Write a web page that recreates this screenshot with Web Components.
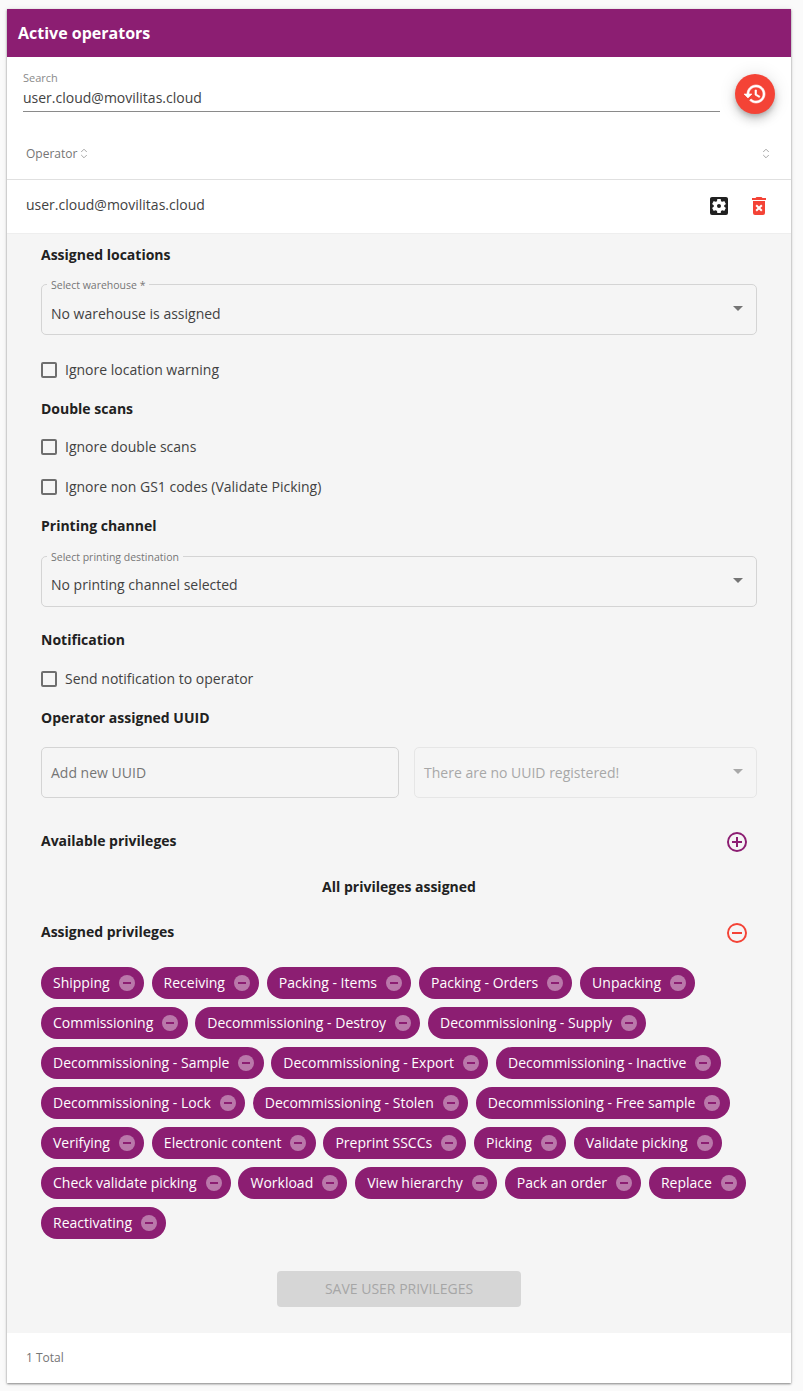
<!DOCTYPE html>
<html lang="en">
<head>
<meta charset="utf-8">
<title>Active operators</title>
<style>
  html, body { margin: 0; background: #fafafa; }
  body { font-family: "Open Sans", "Liberation Sans", sans-serif; color: #212121; padding: 9px 12px 8px 7px; }
</style>
</head>
<body>
<operators-card>
  <search-bar value="user.cloud@movilitas.cloud"></search-bar>
  <operator-table user="user.cloud@movilitas.cloud"></operator-table>
  <operator-details></operator-details>
</operators-card>

<script>
const PURPLE = "#8c1e72";
const RED = "#f44336";

class OperatorsCard extends HTMLElement {
  constructor() {
    super();
    this.attachShadow({ mode: "open" });
    this.shadowRoot.innerHTML = `
      <style>
        :host { display: block; background: #fff; box-shadow: 0 1px 2px rgba(0,0,0,.45), 0 0 6px rgba(0,0,0,.08); }
        header { height: 48px; background: ${PURPLE}; color: #fff; font-size: 16px; font-weight: 700; line-height: 48px; padding-left: 11px; }
        footer { height: 50px; display: flex; align-items: center; padding-left: 19px; padding-bottom: 2px; font-size: 12px; color: #757575; background: #fff; box-sizing: border-box; }
      </style>
      <header>Active operators</header>
      <slot></slot>
      <footer>1 Total</footer>
    `;
  }
}
customElements.define("operators-card", OperatorsCard);

class SearchBar extends HTMLElement {
  constructor() {
    super();
    this.attachShadow({ mode: "open" });
    this.shadowRoot.innerHTML = `
      <style>
        :host { display: flex; height: 74px; box-sizing: border-box; padding: 14px 16px 0; gap: 15px; align-items: flex-start; }
        .field { flex: 1; height: 40px; border-bottom: 1px solid #8a8a8a; }
        label { display: block; font-size: 11px; line-height: 14px; color: #8a8a8a; }
        .value { font-size: 14px; line-height: 20px; margin-top: 3px; color: #424242; }
        button { width: 40px; height: 40px; margin-top: 3px; border: 0; padding: 0; border-radius: 50%; background: ${RED}; display: flex; align-items: center; justify-content: center; box-shadow: 0 3px 5px -1px rgba(0,0,0,.2), 0 6px 10px 0 rgba(0,0,0,.14), 0 1px 18px 0 rgba(0,0,0,.12); }
      </style>
      <div class="field">
        <label>Search</label>
        <div class="value"></div>
      </div>
      <button aria-label="Reset">
        <svg width="24" height="24" viewBox="0 0 24 24"><path fill="#fff" stroke="#fff" stroke-width=".6" d="M13 3c-4.97 0-9 4.03-9 9H1l3.89 3.89.07.14L9 12H6c0-3.87 3.13-7 7-7s7 3.13 7 7-3.13 7-7 7c-1.93 0-3.68-.79-4.94-2.06l-1.42 1.42C8.27 19.99 10.51 21 13 21c4.97 0 9-4.03 9-9s-4.03-9-9-9zm-1 5v5l4.28 2.54.72-1.21-3.5-2.08V8H12z"/></svg>
      </button>
    `;
    this.shadowRoot.querySelector(".value").textContent = this.getAttribute("value");
  }
}
customElements.define("search-bar", SearchBar);

const sortIcon = `<svg width="8" height="11" viewBox="0 0 8 11" fill="none" stroke="#a8a8a8" stroke-width="1"><path d="M1.2 4 4 1.2 6.8 4M1.2 7 4 9.8 6.8 7"/></svg>`;

class OperatorTable extends HTMLElement {
  constructor() {
    super();
    this.attachShadow({ mode: "open" });
    this.shadowRoot.innerHTML = `
      <style>
        :host { display: block; }
        .head { height: 49px; display: flex; align-items: center; justify-content: space-between; padding: 0 21px 4px 19px; box-sizing: border-box; border-bottom: 1px solid #e0e0e0; font-size: 12px; color: #757575; }
        .head span { display: flex; align-items: center; gap: 3px; }
        .row { height: 54px; box-sizing: border-box; display: flex; align-items: center; padding: 0 20px 4px 19px; border-bottom: 1px solid #eeeeee; font-size: 14px; color: #424242; }
        .name { flex: 1; }
        .icons { display: flex; gap: 16px; margin-top: 2px; }
        svg.icon { display: block; }
      </style>
      <div class="head">
        <span>Operator ${sortIcon}</span>
        <span>${sortIcon}</span>
      </div>
      <div class="row">
        <div class="name"></div>
        <div class="icons">
          <svg class="icon" width="24" height="24" viewBox="0 0 24 24"><path fill="#212121" d="M17.25,12C17.25,12.23 17.23,12.46 17.2,12.68L18.68,13.84C18.81,13.95 18.85,14.13 18.76,14.29L17.36,16.71C17.27,16.86 17.09,16.92 16.93,16.86L15.19,16.16C14.83,16.44 14.43,16.67 14,16.85L13.75,18.7C13.72,18.87 13.57,19 13.4,19H10.6C10.43,19 10.28,18.87 10.25,18.7L10,16.85C9.56,16.67 9.17,16.44 8.81,16.16L7.07,16.86C6.91,16.92 6.73,16.86 6.64,16.71L5.24,14.29C5.15,14.13 5.19,13.95 5.32,13.84L6.8,12.68C6.77,12.46 6.75,12.23 6.75,12C6.75,11.77 6.77,11.54 6.8,11.32L5.32,10.16C5.19,10.05 5.15,9.87 5.24,9.71L6.64,7.29C6.73,7.14 6.91,7.08 7.07,7.14L8.81,7.84C9.17,7.56 9.56,7.33 10,7.15L10.25,5.3C10.28,5.13 10.43,5 10.6,5H13.4C13.57,5 13.72,5.13 13.75,5.3L14,7.15C14.43,7.33 14.83,7.56 15.19,7.84L16.93,7.14C17.09,7.08 17.27,7.14 17.36,7.29L18.76,9.71C18.85,9.87 18.81,10.05 18.68,10.16L17.2,11.32C17.23,11.54 17.25,11.77 17.25,12M19,3H5C3.89,3 3,3.89 3,5V19A2,2 0 0,0 5,21H19A2,2 0 0,0 21,19V5C21,3.89 20.1,3 19,3M12,10C10.89,10 10,10.89 10,12A2,2 0 0,0 12,14A2,2 0 0,0 14,12C14,10.89 13.1,10 12,10Z"/></svg>
          <svg class="icon" width="24" height="24" viewBox="0 0 24 24"><path fill="${RED}" d="M6,19A2,2 0 0,0 8,21H16A2,2 0 0,0 18,19V7H6V19M8.46,11.88L9.87,10.47L12,12.59L14.12,10.47L15.53,11.88L13.41,14L15.53,16.12L14.12,17.53L12,15.41L9.88,17.53L8.47,16.12L10.59,14L8.46,11.88M15.5,4L14.5,3H9.5L8.5,4H5V6H19V4H15.5Z"/></svg>
        </div>
      </div>
    `;
    this.shadowRoot.querySelector(".name").textContent = this.getAttribute("user");
  }
}
customElements.define("operator-table", OperatorTable);

class OutlineField extends HTMLElement {
  constructor() {
    super();
    this.attachShadow({ mode: "open" });
    const label = this.getAttribute("label");
    const disabled = this.hasAttribute("disabled");
    const arrow = this.hasAttribute("select");
    const pad = this.getAttribute("pad") || 6;
    this.shadowRoot.innerHTML = `
      <style>
        :host { display: block; position: relative; }
        .box { height: 51px; box-sizing: border-box; border: 1px solid ${disabled ? "#e6e6e6" : "#d4d4d4"}; border-radius: 5px; display: flex; align-items: center; padding: 0 13px 0 9px; font-size: 14px; color: ${this.hasAttribute("muted") ? "#757575" : disabled ? "#a8a8a8" : "#424242"}; }
        .text { flex: 1; ${label ? `padding-top: ${pad}px;` : ""} }
        .legend { position: absolute; left: 6px; top: -6px; padding: 0 4px; font-size: 10.5px; line-height: 14px; color: #757575; background: #f5f5f5; }
        .arrow { width: 0; height: 0; border-left: 5px solid transparent; border-right: 5px solid transparent; border-top: 5px solid ${disabled ? "#a8a8a8" : "#757575"}; margin-bottom: 2px; }
      </style>
      ${label ? `<span class="legend">${label}</span>` : ""}
      <div class="box">
        <span class="text"><slot></slot></span>
        ${arrow ? `<span class="arrow"></span>` : ""}
      </div>
    `;
  }
}
customElements.define("outline-field", OutlineField);

class CheckRow extends HTMLElement {
  constructor() {
    super();
    this.attachShadow({ mode: "open" });
    this.shadowRoot.innerHTML = `
      <style>
        :host { display: flex; align-items: center; gap: 8px; height: 40px; font-size: 14px; color: #424242; }
        i { width: 12px; height: 12px; border: 2px solid #6e6e6e; border-radius: 2px; display: block; }
        span { padding-bottom: 2px; }
      </style>
      <i></i><span><slot></slot></span>
    `;
  }
}
customElements.define("check-row", CheckRow);

class PrivChip extends HTMLElement {
  constructor() {
    super();
    this.attachShadow({ mode: "open" });
    this.shadowRoot.innerHTML = `
      <style>
        :host { display: inline-flex; align-items: center; gap: 9px; height: 32px; padding: 0 9px 0 12px; border-radius: 16px; background: ${PURPLE}; color: #fff; font-size: 14px; white-space: nowrap; }
        span { padding-bottom: 2px; }
        svg { display: block; }
      </style>
      <span><slot></slot></span>
      <svg width="16" height="16" viewBox="0 0 16 16"><circle cx="8" cy="8" r="8" fill="#fff" fill-opacity=".4"/><rect x="4" y="7" width="8" height="2" fill="${PURPLE}"/></svg>
    `;
  }
}
customElements.define("priv-chip", PrivChip);

class OperatorDetails extends HTMLElement {
  constructor() {
    super();
    this.attachShadow({ mode: "open" });
    this.shadowRoot.innerHTML = `
      <style>
        :host { display: block; background: #f5f5f5; padding: 11px 34px 26px; font-size: 14px; color: #212121; }
        .title { height: 20px; line-height: 20px; font-weight: 700; }
        .spread { display: flex; justify-content: space-between; align-items: center; }
        .spread svg { display: block; margin: 2px 8px 0 0; }
        .uuid { display: grid; grid-template-columns: 358px 1fr; gap: 15px; margin-top: 19px; }
        .center { text-align: center; }
        .chips { display: flex; flex-wrap: wrap; gap: 8px 7.7px; margin-top: 25px; }
        priv-chip { padding-right: 9.25px; }
        button { display: block; width: 244px; height: 36px; margin: 32px auto 0; border: 0; border-radius: 4px; background: #d6d6d6; color: #a6a6a6; font: 14px "Open Sans", "Liberation Sans", sans-serif; padding: 0 0 2px; }
      </style>
      <div class="title">Assigned locations</div>
      <outline-field select pad="8" label="Select warehouse *" style="margin-top:19px">No warehouse is assigned</outline-field>
      <check-row style="margin-top:15px">Ignore location warning</check-row>
      <div class="title" style="margin-top:9px">Double scans</div>
      <check-row style="margin-top:8px">Ignore double scans</check-row>
      <check-row>Ignore non GS1 codes (Validate Picking)</check-row>
      <div class="title" style="margin-top:9px">Printing channel</div>
      <outline-field select label="Select printing destination" style="margin-top:20px">No printing channel selected</outline-field>
      <div class="title" style="margin-top:23px">Notification</div>
      <check-row style="margin-top:9px">Send notification to operator</check-row>
      <div class="title" style="margin-top:9px">Operator assigned UUID</div>
      <div class="uuid">
        <outline-field muted>Add new UUID</outline-field>
        <outline-field select disabled>There are no UUID registered!</outline-field>
      </div>
      <div class="title spread" style="margin-top:33px">Available privileges
        <svg width="24" height="24" viewBox="0 0 24 24"><path fill="${PURPLE}" d="M12,20C7.59,20 4,16.41 4,12C4,7.59 7.59,4 12,4C16.41,4 20,7.59 20,12C20,16.41 16.41,20 12,20M12,2A10,10 0 0,0 2,12A10,10 0 0,0 12,22A10,10 0 0,0 22,12A10,10 0 0,0 12,2M13,7H11V11H7V13H11V17H13V13H17V11H13V7Z"/></svg>
      </div>
      <div class="title center" style="margin-top:26px">All privileges assigned</div>
      <div class="title spread" style="margin-top:25px">Assigned privileges
        <svg width="24" height="24" viewBox="0 0 24 24"><path fill="${RED}" d="M12,20C7.59,20 4,16.41 4,12C4,7.59 7.59,4 12,4C16.41,4 20,7.59 20,12C20,16.41 16.41,20 12,20M12,2A10,10 0 0,0 2,12A10,10 0 0,0 12,22A10,10 0 0,0 22,12A10,10 0 0,0 12,2M7,13H17V11H7"/></svg>
      </div>
      <div class="chips"></div>
      <button disabled>SAVE USER PRIVILEGES</button>
    `;
    const privileges = ["Shipping", "Receiving", "Packing - Items", "Packing - Orders", "Unpacking", "Commissioning", "Decommissioning - Destroy", "Decommissioning - Supply", "Decommissioning - Sample", "Decommissioning - Export", "Decommissioning - Inactive", "Decommissioning - Lock", "Decommissioning - Stolen", "Decommissioning - Free sample", "Verifying", "Electronic content", "Preprint SSCCs", "Picking", "Validate picking", "Check validate picking", "Workload", "View hierarchy", "Pack an order", "Replace", "Reactivating"];
    const chips = this.shadowRoot.querySelector(".chips");
    privileges.forEach((p) => {
      const chip = document.createElement("priv-chip");
      chip.textContent = p;
      chips.appendChild(chip);
    });
  }
}
customElements.define("operator-details", OperatorDetails);
</script>
</body>
</html>
